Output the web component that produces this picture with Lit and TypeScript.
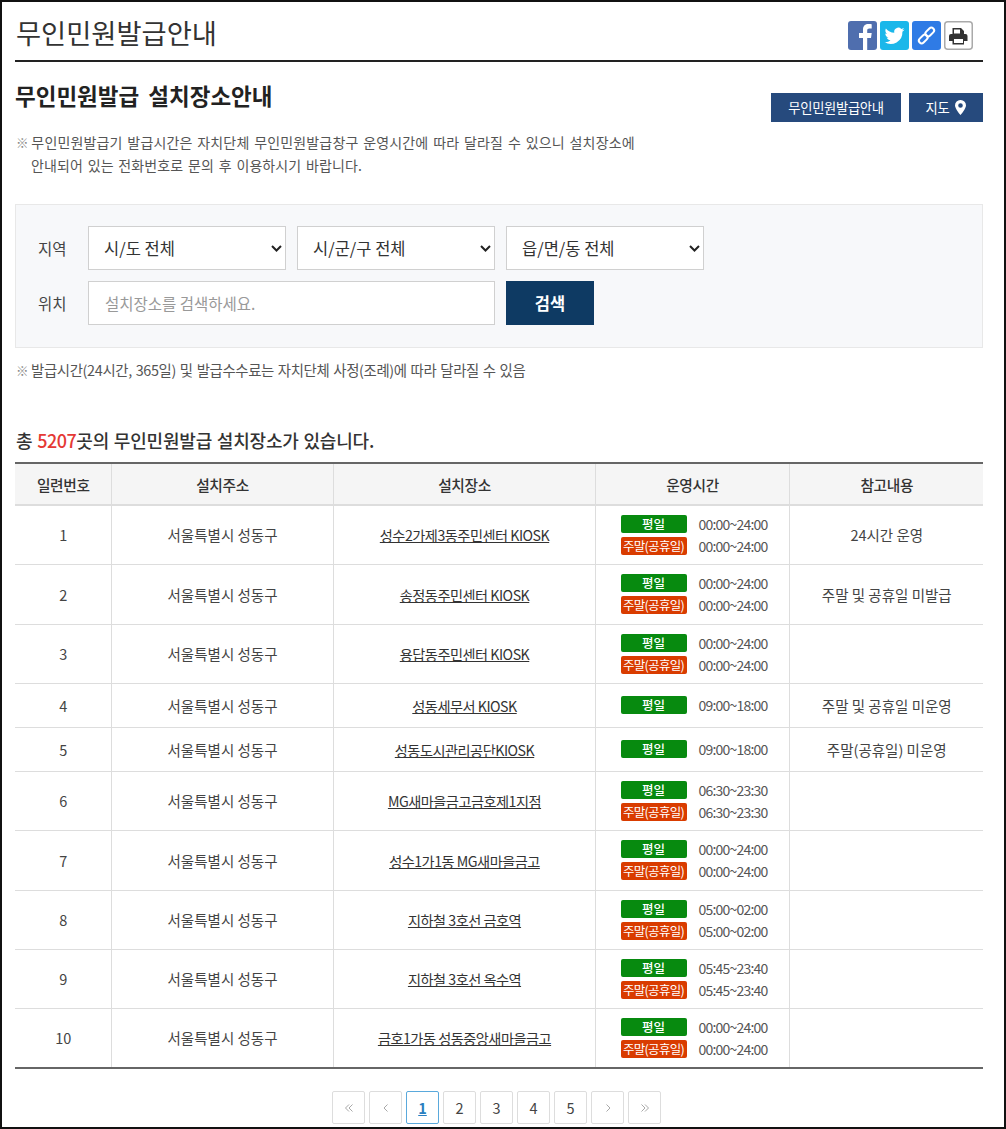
import { LitElement, html, css, svg } from "lit";
import { customElement } from "lit/decorators.js";

type Row = { n: number; place: string; wk: string; we?: string; note?: string; h: number };
const rows: Row[] = [
  { n: 1, place: "성수2가제3동주민센터 KIOSK", wk: "00:00~24:00", we: "00:00~24:00", note: "24시간 운영", h: 59 },
  { n: 2, place: "송정동주민센터 KIOSK", wk: "00:00~24:00", we: "00:00~24:00", note: "주말 및 공휴일 미발급", h: 60 },
  { n: 3, place: "용답동주민센터 KIOSK", wk: "00:00~24:00", we: "00:00~24:00", h: 59 },
  { n: 4, place: "성동세무서 KIOSK", wk: "09:00~18:00", note: "주말 및 공휴일 미운영", h: 44 },
  { n: 5, place: "성동도시관리공단KIOSK", wk: "09:00~18:00", note: "주말(공휴일) 미운영", h: 44 },
  { n: 6, place: "MG새마을금고금호제1지점", wk: "06:30~23:30", we: "06:30~23:30", h: 59 },
  { n: 7, place: "성수1가1동 MG새마을금고", wk: "00:00~24:00", we: "00:00~24:00", h: 60 },
  { n: 8, place: "지하철 3호선 금호역", wk: "05:00~02:00", we: "05:00~02:00", h: 59 },
  { n: 9, place: "지하철 3호선 옥수역", wk: "05:45~23:40", we: "05:45~23:40", h: 59 },
  { n: 10, place: "금호1가동 성동중앙새마을금고", wk: "00:00~24:00", we: "00:00~24:00", h: 60 },
];

@customElement("app-root")
export class AppRoot extends LitElement {
  static styles = css`
    :host {
      display: block;
      box-sizing: border-box;
      width: 1006px;
      height: 1129px;
      border: 2px solid #111;
      padding: 0 21px 0 13px;
      overflow: hidden;
      background: #fff;
      font-family: "Noto Sans CJK KR", "Noto Sans", sans-serif;
      color: #333;
      font-size: 13px;
    }
    .top {
      display: flex;
      justify-content: space-between;
      height: 58px;
      border-bottom: 2px solid #222;
    }
    h1 {
      margin: 1px 0 0 1px;
      font-size: 27.3px;
      font-weight: 400;
      color: #333;
      line-height: 58px;
    }
    .share { display: flex; gap: 3px; margin: 19px 10px 0 0; }
    .share svg { width: 29px; height: 29px; display: block; }
    .head2 { display: flex; justify-content: space-between; align-items: flex-start; margin-top: 18px; }
    h2 { margin: 0; font-size: 22.5px; font-weight: 700; color: #222; line-height: 30px; word-spacing: 4px; }
    .btns { display: flex; gap: 8px; margin-top: 13px; }
    .btn {
      height: 29px; background: #264a7d; color: #fff; font-size: 13.3px; display: flex; align-items: center;
      justify-content: center; letter-spacing: -0.3px;
    }
    .b1 { width: 130px; }
    .b2 { width: 74px; gap: 6px; }
    .b2 svg { width: 11px; height: 15px; }
    .mark { color: #888; font-size: 12.5px; line-height: 1; margin-right: -1px; }
    .notice { margin: 9px 0 0 1px; font-size: 14px; line-height: 23px; color: #555; letter-spacing: 0.1px; word-spacing: 1.5px; padding-left: 15px; text-indent: -15px; width: 660px; }
    .notice .mark { margin-right: -2px; }
    .l1 { letter-spacing: 0.15px; }
    .search {
      margin-top: 27px; height: 144px; box-sizing: border-box; background: #f7f8fa; border: 1px solid #e8e8e8;
      padding: 21px 0 0 22px; display: flex; flex-direction: column; gap: 11px;
    }
    .line { display: flex; align-items: center; }
    .label { width: 50px; font-size: 15.5px; color: #444; }
    select, .input {
      box-sizing: border-box; height: 44px; border: 1px solid #d0d0d0; background: #fff;
      font-family: inherit; font-size: 16.5px; color: #333; border-radius: 0;
    }
    .sel { position: relative; width: 198px; margin-right: 11px; height: 44px; }
    select { width: 100%; padding: 0 24px 0 15px; appearance: none; -webkit-appearance: none; }
    .chev { position: absolute; right: 4px; top: 19px; width: 11px; height: 7px; pointer-events: none; }
    .input { width: 407px; padding: 0 16px; margin-right: 11px; font-size: 15.5px; }
    .input::placeholder { color: #999; }
    .go { width: 88px; height: 44px; border: 0; background: #0e3a63; color: #fff; font: 700 16.5px "Noto Sans CJK KR", sans-serif; padding: 0; }
    .note2 { margin: 12px 0 0 1px; font-size: 14.4px; line-height: 20px; color: #555; letter-spacing: -0.35px; word-spacing: 1px; }
    .total { margin: 48px 0 0 1px; font-size: 18px; font-weight: 500; line-height: 24px; color: #333; letter-spacing: -0.2px; word-spacing: 1px; }
    .total b { color: #e53935; font-weight: 500; letter-spacing: -0.5px; }
    table { margin-top: 10px; border-collapse: collapse; table-layout: fixed; width: 968px; border-top: 2px solid #666; border-bottom: 2px solid #666; }
    th, td { border-left: 1px solid #ddd; border-bottom: 1px solid #ddd; text-align: center; padding: 0 0 0 1px; font-size: 14.5px; color: #444; }
    th:first-child, td:first-child { border-left: 0; }
    th { height: 40px; background: #f5f5f5; font-weight: 500; color: #333; border-bottom: 2px solid #ddd; font-size: 14.7px; letter-spacing: -0.35px; }
    tr:last-child td { border-bottom: 0; }
    td a { color: #333; text-decoration: underline; font-size: 14.2px; letter-spacing: -0.5px; }
    .times { display: flex; flex-direction: column; gap: 4px; width: 146px; margin: 0 auto; padding-left: 2px; }
    .t { display: flex; align-items: center; justify-content: space-between; height: 18px; }
    .tag { width: 66px; height: 18px; line-height: 17px; border-radius: 2px; color: #fff; font-size: 12.5px; text-align: center; letter-spacing: -0.7px; }
    .wk { background: #078a0f; font-weight: 500; letter-spacing: 0; }
    .we { background: #d93c00; }
    .time { font-size: 14px; color: #555; letter-spacing: -0.8px; width: 68px; text-align: left; }
    .pager { display: flex; justify-content: center; gap: 4px; margin-top: 22px; padding-right: 5px; }
    .pg {
      box-sizing: border-box; width: 33px; height: 33px; border: 1px solid #ddd; border-radius: 2px; display: flex;
      align-items: center; justify-content: center; font-size: 14.5px; color: #444; background: #fff;
    }
    .pg.arrow { color: #aaa; }
    .pg svg { width: 12px; height: 12px; }
    .pg.on { border-color: #5aa9dc; color: #2a7fc0; font-weight: 700; text-decoration: underline; }
  `;

  private arrow(d: string) {
    return html`<span class="pg arrow"><svg viewBox="0 0 12 12" fill="none" stroke="#a8a8a8" stroke-width="1">${svg`<path d=${d} />`}</svg></span>`;
  }

  private sel(label: string) {
    return html`<span class="sel"><select><option>${label}</option></select><svg class="chev" viewBox="0 0 11 7" fill="none" stroke="#222" stroke-width="2"><path d="M1 1l4.500 4.500L10 1" /></svg></span>`;
  }

  render() {
    return html`
      <div class="top">
        <h1>무인민원발급안내</h1>
        <div class="share">
          <svg viewBox="0 0 29 29"><rect width="29" height="29" rx="3" fill="#4f6eae" /><path d="M15 29V17h-4v-5h4V8.500C15 4.800 17.300 3 20.500 3c1.500 0 2.800.1 3.200.2v4.300h-2.300c-1.700 0-2.200.9-2.200 2.100V12h4.500l-.7 5h-3.800v12z" fill="#fff" /></svg>
          <svg viewBox="0 0 29 29"><rect width="29" height="29" rx="3" fill="#1ab7ea" /><path d="M24.500 8.600c-.8.300-1.600.6-2.400.7.900-.5 1.500-1.300 1.800-2.300-.8.500-1.700.8-2.600 1a4.100 4.100 0 0 0-7 3.700c-3.400-.2-6.400-1.800-8.400-4.300-1.100 1.900-.5 4.300 1.300 5.500-.7 0-1.300-.2-1.900-.5 0 2 1.400 3.700 3.300 4.100-.6.200-1.200.2-1.900.1.500 1.600 2 2.800 3.800 2.800a8.300 8.300 0 0 1-6.100 1.700 11.700 11.700 0 0 0 18-10.400c.8-.5 1.500-1.200 2.100-2.100z" fill="#fff" /></svg>
          <svg viewBox="0 0 29 29"><rect width="29" height="29" rx="3" fill="#2f7be5" /><g fill="none" stroke="#fff" stroke-width="2"><rect x="15" y="6" width="5.500" height="10" rx="2.750" transform="rotate(45 17.750 11)" /><rect x="8.500" y="13" width="5.500" height="10" rx="2.750" transform="rotate(45 11.250 18)" /></g></svg>
          <svg viewBox="0 0 29 29"><rect x=".75" y=".75" width="27.500" height="27.500" rx="3" fill="#fff" stroke="#aaa" stroke-width="1.500" /><path d="M8.500 7h8.500l3 3v3h1.500a2 2 0 0 1 2 2v5h-3.500v3.500h-11.500V20H5v-5a2 2 0 0 1 2-2h1.500z" fill="#333" /><path d="M10 8.500h6v4h-6zM10 18h9v4h-9z" fill="#fff" /></svg>
        </div>
      </div>
      <div class="head2">
        <h2>무인민원발급 설치장소안내</h2>
        <div class="btns">
          <span class="btn b1">무인민원발급안내</span>
          <span class="btn b2">지도<svg viewBox="0 0 11 15"><path fill-rule="evenodd" d="M5.500 0A5.400 5.400 0 0 0 0 5.400C0 8.500 5.500 15 5.500 15S11 8.500 11 5.400A5.400 5.400 0 0 0 5.500 0zm0 3.200a2.300 2.300 0 1 1 0 4.600 2.300 2.300 0 0 1 0-4.600z" fill="#fff" /></svg></span>
        </div>
      </div>
      <p class="notice"><span class="mark">※</span> <span class="l1">무인민원발급기 발급시간은 자치단체 무인민원발급창구 운영시간에 따라 달라질 수 있으니 설치장소에</span><br />안내되어 있는 전화번호로 문의 후 이용하시기 바랍니다.</p>
      <div class="search">
        <div class="line">
          <span class="label">지역</span>
          ${this.sel("시/도 전체")}
          ${this.sel("시/군/구 전체")}
          ${this.sel("읍/면/동 전체")}
        </div>
        <div class="line">
          <span class="label">위치</span>
          <input class="input" placeholder="설치장소를 검색하세요." />
          <button class="go">검색</button>
        </div>
      </div>
      <p class="note2"><span class="mark">※</span> 발급시간(24시간, 365일) 및 발급수수료는 자치단체 사정(조례)에 따라 달라질 수 있음</p>
      <p class="total">총 <b>5207</b>곳의 무인민원발급 설치장소가 있습니다.</p>
      <table>
        <colgroup><col style="width:96px" /><col style="width:222px" /><col style="width:262px" /><col style="width:194px" /><col style="width:194px" /></colgroup>
        <thead><tr><th>일련번호</th><th>설치주소</th><th>설치장소</th><th>운영시간</th><th>참고내용</th></tr></thead>
        <tbody>
          ${rows.map(
            (r) => html`<tr style="height:${r.h}px">
              <td>${r.n}</td>
              <td>서울특별시 성동구</td>
              <td><a>${r.place}</a></td>
              <td>
                <div class="times">
                  <div class="t"><span class="tag wk">평일</span><span class="time">${r.wk}</span></div>
                  ${r.we ? html`<div class="t"><span class="tag we">주말(공휴일)</span><span class="time">${r.we}</span></div>` : ""}
                </div>
              </td>
              <td>${r.note ?? ""}</td>
            </tr>`
          )}
        </tbody>
      </table>
      <div class="pager">
        ${this.arrow("M6 2.500 2.500 6 6 9.500M9.500 2.500 6 6l3.500 3.500")}
        ${this.arrow("M7.500 2.500 4 6l3.500 3.500")}
        <span class="pg on">1</span><span class="pg">2</span><span class="pg">3</span><span class="pg">4</span><span class="pg">5</span>
        ${this.arrow("M4.500 2.500 8 6 4.500 9.500")}
        ${this.arrow("M2.500 2.500 6 6 2.500 9.500M6 2.500 9.500 6 6 9.500")}
      </div>
    `;
  }
}
